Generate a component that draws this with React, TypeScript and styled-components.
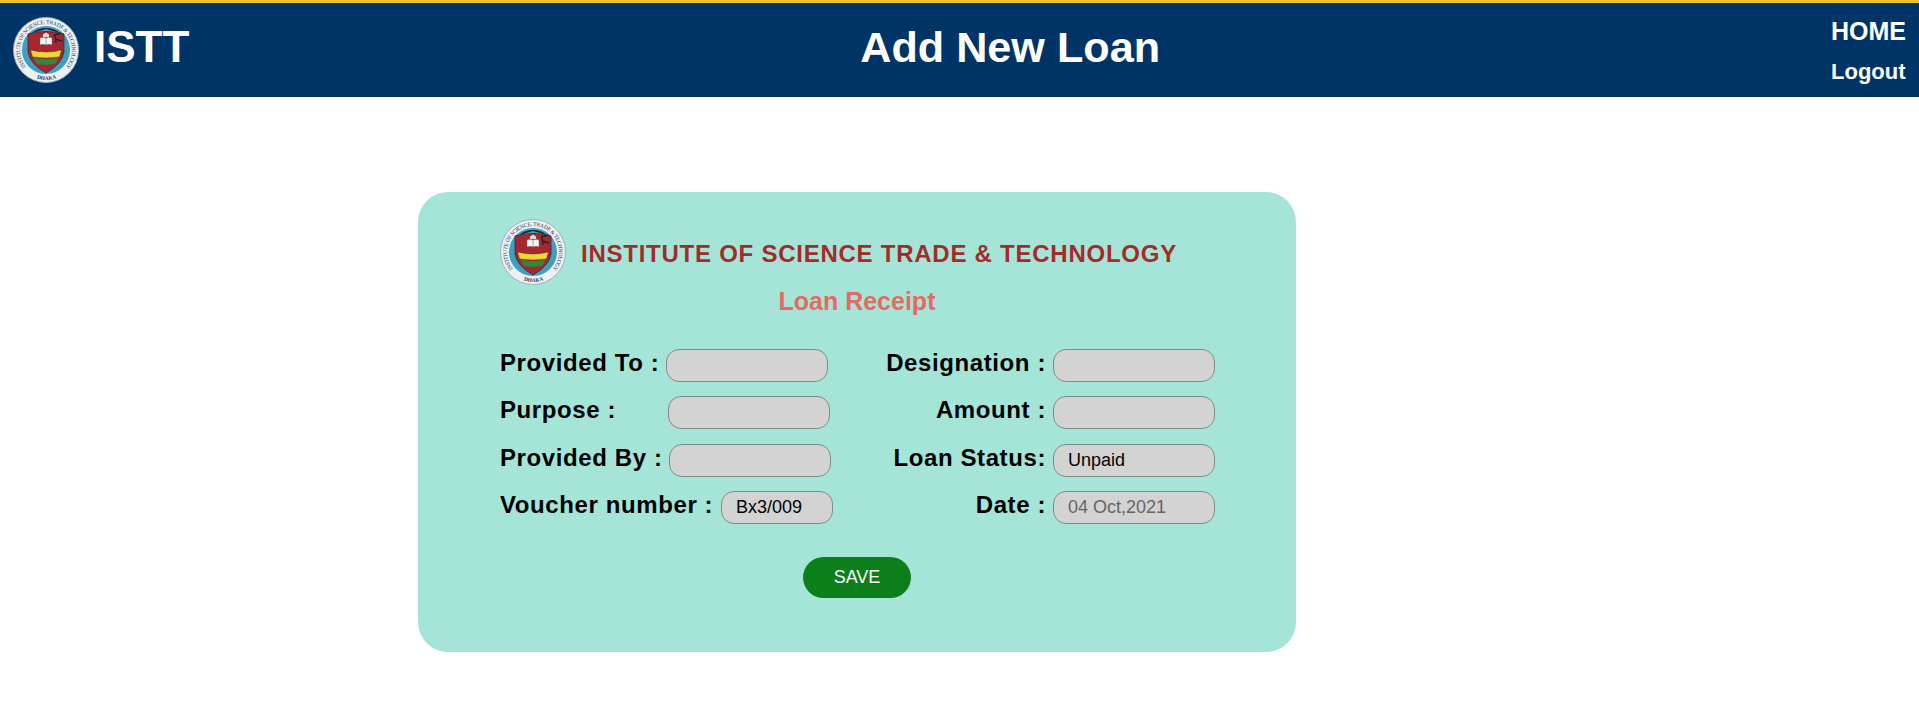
import { FC } from 'react';
import styled, { createGlobalStyle } from 'styled-components';

const GlobalStyle = createGlobalStyle`
  html, body {
    margin: 0;
    padding: 0;
    background: #fff;
    font-family: "Liberation Sans", Arial, sans-serif;
  }
`;

const Header = styled.header`
  display: flex;
  justify-content: space-between;
  align-items: center;
  box-sizing: border-box;
  height: 97px;
  padding: 0 13px 0 13px;
  background: #003366;
  border-top: 3px solid #f2bf2f;
  color: #fff;
`;

const Brand = styled.div`
  display: flex;
  align-items: center;
  gap: 15px;
`;

const BrandName = styled.span`
  margin-bottom: 6px;
  font-size: 44px;
  font-weight: 700;
`;

const PageTitle = styled.h1`
  margin: 0 0 6px;
  font-size: 43.2px;
  font-weight: 700;
`;

const Nav = styled.nav`
  display: flex;
  flex-direction: column;
  align-items: flex-start;
  gap: 13px;
  margin-top: 1px;
  font-weight: 700;
`;

const NavLink = styled.a<{ $size: number }>`
  font-size: ${(p) => p.$size}px;
  color: #fff;
  text-decoration: none;
`;

const Main = styled.main`
  padding: 95px 0 50px 418px;
`;

const Card = styled.section`
  box-sizing: border-box;
  width: 878px;
  height: 460px;
  padding: 27px 82px 0;
  background: #a5e5d8;
  border-radius: 30px;
`;

const CardHead = styled.div`
  display: flex;
  align-items: center;
  gap: 15px;
`;

const Institute = styled.h2`
  margin: 3px 0 0;
  font-size: 24px;
  font-weight: 700;
  letter-spacing: 0.75px;
  color: #a52a2a;
`;

const Receipt = styled.h3`
  margin: 2px 0 0;
  font-size: 25px;
  font-weight: 700;
  text-align: center;
  color: #e56b62;
`;

const FormGrid = styled.div`
  display: grid;
  grid-template-columns: 370px 345px;
  grid-auto-rows: 47.4px;
  margin-top: 32px;
`;

const Row = styled.div<{ $end?: boolean }>`
  display: flex;
  align-items: flex-start;
  justify-content: ${(p) => (p.$end ? 'flex-end' : 'flex-start')};
  gap: 7px;
`;

const Label = styled.label<{ $width?: number }>`
  font-size: 24px;
  font-weight: 700;
  letter-spacing: 0.6px;
  line-height: 29px;
  white-space: nowrap;
  color: #000;
  ${(p) => (p.$width ? `width: ${p.$width}px;` : '')}
`;

const Field = styled.input<{ $width?: number; $muted?: boolean }>`
  box-sizing: border-box;
  width: ${(p) => p.$width ?? 162}px;
  height: 33px;
  margin-top: 1px;
  padding: 0 14px;
  background: #d3d3d3;
  border: 1px solid #7f8d8a;
  border-radius: 13px;
  outline: none;
  font-family: inherit;
  font-size: 18px;
  color: ${(p) => (p.$muted ? '#666' : '#000')};
`;

const Actions = styled.div`
  display: flex;
  justify-content: center;
  margin-top: 19px;
`;

const SaveButton = styled.button`
  width: 108px;
  height: 41px;
  background: #0c7e1a;
  border: none;
  border-radius: 21px;
  font-family: inherit;
  font-size: 18px;
  color: #fff;
`;

const SealMark = styled.svg`
  flex: none;
  display: block;
`;

const Seal: FC<{ id: string }> = ({ id }) => (
  <SealMark width="66" height="66" viewBox="0 0 66 66" aria-hidden="true">
    <circle cx="33" cy="33" r="32.5" fill="#eef1f4" stroke="#9fb0c0" strokeWidth="1" />
    <circle cx="33" cy="33" r="24" fill="#3f9fc0" />
    <path id={`${id}-top`} d="M13.1 49.7 A26 26 0 1 1 52.9 49.7" fill="none" />
    <path id={`${id}-bottom`} d="M18 59 A30 30 0 0 0 48 59" fill="none" />
    <text fontFamily='"Liberation Serif", serif' fontSize="5.6" fill="#22375f">
      <textPath href={`#${id}-top`} textLength="118" lengthAdjust="spacing">
        INSTITUTE OF SCIENCE, TRADE &amp; TECHNOLOGY
      </textPath>
    </text>
    <text fontFamily='"Liberation Serif", serif' fontSize="5.4" fontWeight="700" fill="#22375f">
      <textPath href={`#${id}-bottom`} startOffset="20%">
        DHAKA
      </textPath>
    </text>
    <path d="M19 16 A22 22 0 0 1 47 16 L33 12 Z" fill="#20242c" />
    <path d="M15 17 Q33 12 51 17 L51 35 Q49 47 33 56 Q17 47 15 35 Z" fill="#a8262f" stroke="#1d2530" strokeWidth="0.7" />
    <path d="M30 20 V17.5 L33 15.5 L36 17.5 V20 Z" fill="#d9d9da" />
    <path d="M27 21 Q30 19.5 33 21 Q36 19.5 39 21 V28 Q36 26.5 33 28 Q30 26.5 27 28 Z" fill="#f6f6f6" stroke="#555" strokeWidth="0.4" />
    <path d="M33 21 V28" stroke="#555" strokeWidth="0.5" />
    <path d="M41 18 L48 16 M42 22 L49 24 M42 18 L43 26" stroke="#1d2530" strokeWidth="1.5" fill="none" />
    <path d="M17.5 33 Q33 37 48.5 33 L46.5 40 Q33 42 19.5 40 Z" fill="#f0d637" stroke="#1d2530" strokeWidth="0.4" />
    <path d="M21 41 Q33 43 45 41 Q44 44.5 42 47 Q33 48.5 24 47 Q22 44.5 21 41 Z" fill="#2f8a3d" />
  </SealMark>
);

const App: FC = () => (
  <>
    <GlobalStyle />
    <Header>
      <Brand>
        <Seal id="head-seal" />
        <BrandName>ISTT</BrandName>
      </Brand>
      <PageTitle>Add New Loan</PageTitle>
      <Nav>
        <NavLink href="#" $size={25}>HOME</NavLink>
        <NavLink href="#" $size={22}>Logout</NavLink>
      </Nav>
    </Header>
    <Main>
      <Card>
        <CardHead>
          <Seal id="card-seal" />
          <Institute>INSTITUTE OF SCIENCE TRADE &amp; TECHNOLOGY</Institute>
        </CardHead>
        <Receipt>Loan Receipt</Receipt>
        <FormGrid>
          <Row>
            <Label $width={159}>Provided To :</Label>
            <Field />
          </Row>
          <Row $end>
            <Label>Designation :</Label>
            <Field />
          </Row>
          <Row>
            <Label $width={161}>Purpose :</Label>
            <Field />
          </Row>
          <Row $end>
            <Label>Amount :</Label>
            <Field />
          </Row>
          <Row>
            <Label $width={162}>Provided By :</Label>
            <Field />
          </Row>
          <Row $end>
            <Label>Loan Status:</Label>
            <Field defaultValue="Unpaid" />
          </Row>
          <Row>
            <Label $width={214}>Voucher number :</Label>
            <Field $width={112} defaultValue="Bx3/009" />
          </Row>
          <Row $end>
            <Label>Date :</Label>
            <Field $muted defaultValue="04 Oct,2021" />
          </Row>
        </FormGrid>
        <Actions>
          <SaveButton>SAVE</SaveButton>
        </Actions>
      </Card>
    </Main>
  </>
);

export default App;
